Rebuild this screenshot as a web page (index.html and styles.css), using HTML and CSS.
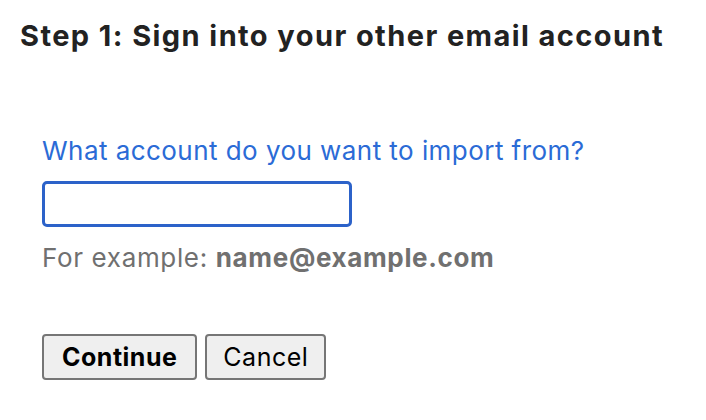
FILE: index.html
```html
<!DOCTYPE html>
<html>
<head>
<meta charset="utf-8">
<link rel="stylesheet" href="styles.css">
</head>
<body>
<h1 class="title">Step 1: Sign into your other email account</h1>
<form class="form">
  <label class="label" for="acct">What account do you want to import from?</label>
  <input class="field" id="acct" type="text">
  <div class="hint">For example: <b>name@example.com</b></div>
  <div class="actions">
    <button type="button" class="btn btn-primary">Continue</button>
    <button type="button" class="btn">Cancel</button>
  </div>
</form>
</body>
</html>
```

FILE: styles.css
```css
html, body {
  margin: 0;
  padding: 0;
  background: #ffffff;
}
body {
  font-family: Inter, Roboto, "Noto Sans", sans-serif;
  color: #202124;
}
.title {
  margin: 0;
  padding: 18px 0 0 20px;
  font-size: 29px;
  font-weight: 700;
  line-height: 36px;
  color: #222222;
  letter-spacing: 1.42px;
  white-space: nowrap;
}
.form {
  display: flex;
  flex-direction: column;
  align-items: flex-start;
  padding: 82px 0 0 42px;
}
.label {
  font-size: 26px;
  line-height: 30px;
  letter-spacing: 0.45px;
  color: #2b6bd6;
  white-space: nowrap;
}
.field {
  box-sizing: border-box;
  margin: 15px 0 0 0;
  width: 310px;
  height: 46px;
  border: 3px solid #2c62c9;
  border-radius: 5px;
  outline: none;
  background: #fff;
}
.hint {
  margin-top: 16px;
  font-size: 26px;
  line-height: 30px;
  letter-spacing: 0.65px;
  color: #707070;
  white-space: nowrap;
}
.hint b {
  font-weight: 700;
}
.actions {
  display: flex;
  gap: 8px;
  margin-top: 61px;
}
.btn {
  box-sizing: border-box;
  height: 46px;
  padding: 0 16px;
  font-family: Inter, sans-serif;
  font-size: 25px;
  letter-spacing: 0.5px;
  color: #000;
  background: #efefef;
  border: 2px solid #767676;
  border-radius: 4px;
}
.btn-primary {
  padding: 0 18px;
  font-weight: 700;
}
```
